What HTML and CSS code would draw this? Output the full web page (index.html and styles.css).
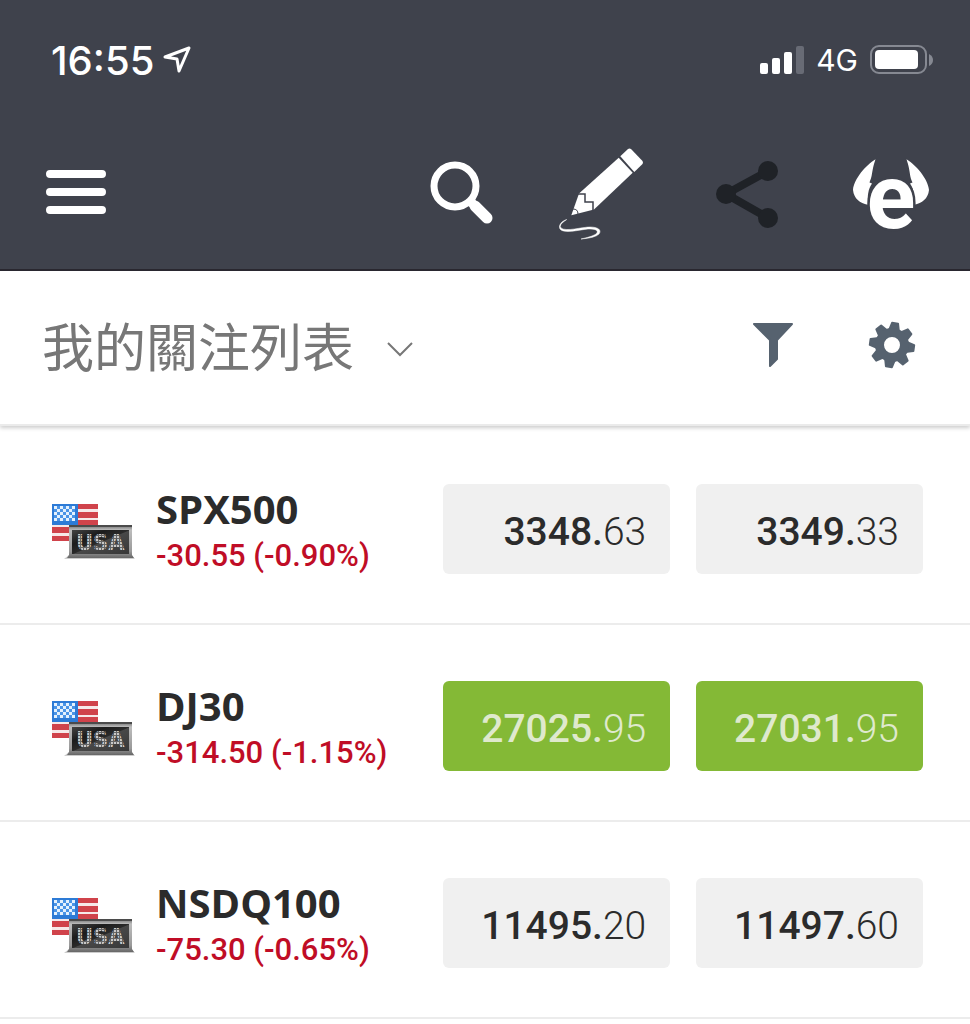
FILE: index.html
```html
<!DOCTYPE html>
<html lang="zh-Hant">
<head>
    <meta charset="UTF-8">
    <meta name="viewport" content="width=device-width, initial-scale=1.0">
    <title>我的關注列表</title>
    <link rel="stylesheet" href="styles.css">
</head>
<body>

    <!-- shared market icon -->
    <svg class="defs" width="0" height="0" aria-hidden="true">
        <defs>
            <linearGradient id="frame" x1="0" y1="0" x2="0" y2="1">
                <stop offset="0" stop-color="#6a6a6a"/>
                <stop offset="0.15" stop-color="#bdbdbd"/>
                <stop offset="0.8" stop-color="#999"/>
                <stop offset="1" stop-color="#666"/>
            </linearGradient>
            <linearGradient id="screen" x1="0" y1="0" x2="1" y2="1">
                <stop offset="0" stop-color="#444"/>
                <stop offset="0.3" stop-color="#1c1c1c"/>
                <stop offset="0.5" stop-color="#2a2a2a"/>
                <stop offset="0.52" stop-color="#484848"/>
                <stop offset="1" stop-color="#383838"/>
            </linearGradient>
            <pattern id="stars" width="6" height="6" patternUnits="userSpaceOnUse">
                <rect width="6" height="6" fill="#4a94e6"/>
                <rect width="3" height="3" fill="#e4f1fd"/>
                <rect x="3" y="3" width="3" height="3" fill="#e4f1fd"/>
            </pattern>
            <pattern id="led" width="3" height="3" patternUnits="userSpaceOnUse">
                <rect width="3" height="3" fill="#666"/>
                <rect width="2" height="2" fill="#c8c8c8"/>
            </pattern>
            <symbol id="usa" viewBox="0 0 84 57">
                <path fill="#d0434b" d="M1 1h46v37H1z"/>
                <path fill="#f6e9e9" d="M1 6h46v3H1zM1 15h46v2H1zM1 22h46v2H1zM1 30h46v3H1z"/>
                <path fill="#2d7bd6" d="M1 1h26v21H1z"/>
                <path fill="url(#stars)" d="M3 3h21v15H3z"/>
                <path fill="#ccc" d="M13 56l5-4h62l4 4z"/>
                <path fill="url(#frame)" d="M18 22h63v30l2 3H16l2-3z"/>
                <path fill="#4b4b4b" d="M18 22h63v2H18z"/>
                <path fill="url(#screen)" d="M21 27h57v24H21z"/>
                <text class="led" x="25" y="47" fill="url(#led)">USA</text>
            </symbol>
        </defs>
    </svg>

    <header class="header">
        <div class="status">
            <span class="time">16:55</span>
            <svg class="location" width="28" height="28" viewBox="0 0 28 28" aria-hidden="true">
                <path d="M2 11L26 2L16 25L14 13z" fill="none" stroke="#fff" stroke-width="3" stroke-linejoin="round"/>
            </svg>
            <svg class="signal" width="44" height="28" viewBox="0 0 44 28" aria-hidden="true">
                <rect x="0" y="17" width="8" height="11" rx="2" fill="#fff"/>
                <rect x="12" y="12" width="8" height="16" rx="2" fill="#fff"/>
                <rect x="24" y="6" width="8" height="22" rx="2" fill="#fff"/>
                <rect x="36" y="0" width="8" height="28" rx="2" fill="#686b75"/>
            </svg>
            <span class="network">4G</span>
            <svg width="63" height="30" viewBox="0 0 63 30" aria-hidden="true">
                <rect x="1" y="1" width="55" height="27" rx="8" fill="none" stroke="#868992" stroke-width="2"/>
                <rect x="5" y="5" width="43" height="19" rx="4" fill="#fff"/>
                <path d="M59 9q4 2 4 6t-4 6z" fill="#868992"/>
            </svg>
        </div>

        <nav class="nav">
            <button class="icon-btn menu" aria-label="選單">
                <svg width="60" height="46" viewBox="0 0 60 46">
                    <path d="M4 3h52M4 21h52M4 39h52" stroke="#fff" stroke-width="8" stroke-linecap="round"/>
                </svg>
            </button>
            <button class="icon-btn" aria-label="搜尋">
                <svg width="90" height="92" viewBox="0 0 90 92">
                    <circle cx="41" cy="38" r="21" fill="none" stroke="#fff" stroke-width="7"/>
                    <path d="M55 52l5 5" stroke="#fff" stroke-width="9"/>
                    <path d="M61 58l12 12" stroke="#fff" stroke-width="11" stroke-linecap="round"/>
                </svg>
            </button>
            <button class="icon-btn" aria-label="編輯">
                <svg width="90" height="92" viewBox="0 0 90 92">
                    <g fill="#fff">
                        <path d="M62.3 8.3L70 1Q71.5 0 73 1L84.5 13Q85.5 15 84.5 16L76.3 24z"/>
                        <path d="M60.7 9.7L74.7 24.7L36 61.5L13.3 67.3L21 45.5z"/>
                    </g>
                    <path d="M20 46H27V54H35V63" fill="none" stroke="#3f424c" stroke-width="1.5"/>
                    <path d="M15 61q5 0 5 5" fill="none" stroke="#3f424c" stroke-width="1"/>
                    <path d="M8.700 71.500Q0 77 3 80C8 84 24 79 32 79C40 79 44 82 41 86Q37 90 23 91Q37 88 39 85C41 81 33 81 30 81C20 82 6 86 2 81C0 77 4 73 8.700 71.500z" fill="#fff" stroke="#fff" stroke-width="0.500"/>
                </svg>
            </button>
            <button class="icon-btn" aria-label="分享">
                <svg width="90" height="92" viewBox="0 0 90 92">
                    <path d="M66 23L24 46L66 70" fill="none" stroke="#1f2227" stroke-width="8"/>
                    <g fill="#1f2227">
                        <circle cx="66" cy="23" r="10"/>
                        <circle cx="24" cy="46" r="10"/>
                        <circle cx="66" cy="70" r="10"/>
                    </g>
                </svg>
            </button>
            <button class="icon-btn" aria-label="eToro">
                <svg width="90" height="92" viewBox="0 0 90 92">
                    <g fill="#fff">
                        <path id="horn" d="M29.5 11.3C20 17 8 31 7 42C8 51 14 55 21.7 56.7C21.5 48 22 41 26 35.5L23.5 34.5C27 27 25 25 29.5 11.3z"/>
                        <use href="#horn" transform="translate(90 0) scale(-1 1)"/>
                        <text class="logo-e" x="45" y="80" text-anchor="middle">e</text>
                    </g>
                </svg>
            </button>
        </nav>
    </header>

    <section class="toolbar">
        <label class="list-picker">
            <select aria-label="列表">
                <option>我的關注列表</option>
            </select>
            <svg width="26" height="16" viewBox="0 0 26 16" aria-hidden="true">
                <path d="M1 1l12 12L25 1" fill="none" stroke="#777" stroke-width="2"/>
            </svg>
        </label>
        <button class="icon-btn" aria-label="篩選">
            <svg width="42" height="46" viewBox="0 0 42 46">
                <path d="M2 2H40L25 18V37L18 44V18z" fill="#56626f" stroke="#56626f" stroke-width="2" stroke-linejoin="round"/>
            </svg>
        </button>
        <button class="icon-btn settings" aria-label="設定">
            <svg width="46" height="46" viewBox="-23 -23 46 46">
                <g fill="#56626f" stroke="#56626f" stroke-width="2" stroke-linejoin="round" transform="rotate(8)">
                    <path id="tooth" d="M-5 -14L-3 -22H3L5 -14z"/>
                    <use href="#tooth" transform="rotate(45)"/>
                    <use href="#tooth" transform="rotate(90)"/>
                    <use href="#tooth" transform="rotate(135)"/>
                    <use href="#tooth" transform="rotate(180)"/>
                    <use href="#tooth" transform="rotate(225)"/>
                    <use href="#tooth" transform="rotate(270)"/>
                    <use href="#tooth" transform="rotate(315)"/>
                </g>
                <circle r="12.5" fill="none" stroke="#56626f" stroke-width="9"/>
            </svg>
        </button>
    </section>

    <ul class="watchlist">
        <li class="row">
            <svg class="market" width="84" height="57"><use href="#usa"/></svg>
            <div class="instrument">
                <h2 class="name">SPX500</h2>
                <p class="change">-30.55 (-0.90%)</p>
            </div>
            <div class="prices">
                <button class="price">3348.<span>63</span></button>
                <button class="price">3349.<span>33</span></button>
            </div>
        </li>
        <li class="row">
            <svg class="market" width="84" height="57"><use href="#usa"/></svg>
            <div class="instrument">
                <h2 class="name">DJ30</h2>
                <p class="change">-314.50 (-1.15%)</p>
            </div>
            <div class="prices">
                <button class="price up">27025.<span>95</span></button>
                <button class="price up">27031.<span>95</span></button>
            </div>
        </li>
        <li class="row">
            <svg class="market" width="84" height="57"><use href="#usa"/></svg>
            <div class="instrument">
                <h2 class="name">NSDQ100</h2>
                <p class="change">-75.30 (-0.65%)</p>
            </div>
            <div class="prices">
                <button class="price">11495.<span>20</span></button>
                <button class="price">11497.<span>60</span></button>
            </div>
        </li>
    </ul>

</body>
</html>
```
FILE: styles.css
```css
* {
    margin: 0;
    padding: 0;
    box-sizing: border-box;
}

body {
    background-color: white;
    color: #2b2b2b;
    font-family: Roboto, "Noto Sans CJK TC", sans-serif;
}

svg {
    display: block;
    flex: none;
    overflow: visible;
}

button, select {
    border: none;
    background: none;
    font: inherit;
    color: inherit;
    cursor: pointer;
}

.defs {
    position: absolute;
}

/* top bar */
.header {
    background-color: #3f424c;
    border-bottom: 2px solid #2a2830;
    color: white;
    padding-bottom: 29px;
}

.status {
    display: flex;
    align-items: center;
    height: 120px;
    padding: 0 37px 0 51px;
    font-family: Inter, sans-serif;
}

.time {
    font-size: 40px;
    font-weight: 500;
}

.location {
    margin-left: 9px;
}

.signal {
    margin-left: auto;
}

.network {
    margin: 0 12px;
    font-size: 30px;
}

.nav {
    display: flex;
    align-items: center;
    gap: 54px;
    padding: 28px 34px 0 46px;
}

.menu {
    margin-right: auto;
}

.logo-e {
    font: bold 90px Roboto, sans-serif;
    stroke: #3f424c;
    stroke-width: 5px;
    paint-order: stroke;
}

/* list title */
.toolbar {
    display: flex;
    align-items: center;
    height: 155px;
    padding: 0 55px 6px 42px;
    border-bottom: 2px solid #ebebeb;
    box-shadow: 0 2px 4px rgba(0, 0, 0, 0.2);
}

.list-picker {
    display: flex;
    align-items: center;
    gap: 32px;
    margin-right: auto;
    color: #777;
}

.list-picker select {
    appearance: none;
    font-family: "Noto Sans CJK TC", sans-serif;
    font-size: 52px;
    line-height: 76px;
}

.list-picker svg {
    margin-top: 10px;
}

.settings {
    margin-left: 75px;
}

/* rows */
.watchlist {
    list-style: none;
    padding-top: 2px;
}

.row {
    display: flex;
    align-items: flex-start;
    padding: 56px 47px 45px 51px;
    border-bottom: 2px solid #ececec;
}

.market {
    align-self: center;
}

.led {
    font: bold 21px "DejaVu Sans", sans-serif;
}

.instrument {
    flex: 1;
    padding-left: 21px;
    white-space: nowrap;
}

.name {
    font: bold 40px/50px "Open Sans", sans-serif;
}

.change {
    color: #c00d26;
    font-size: 31px;
    font-weight: 500;
    line-height: 44px;
}

.prices {
    flex: 0 0 55%;
    display: flex;
    gap: 26px;
}

.price {
    flex: 1;
    height: 90px;
    padding: 6px 24px 0 0;
    border-radius: 6px;
    background-color: #f0f0f0;
    font-size: 39px;
    font-weight: 500;
    text-align: right;
}

.price span {
    font-weight: 300;
}

.up {
    background-color: #84b936;
    color: #dfe9cd;
}
```
